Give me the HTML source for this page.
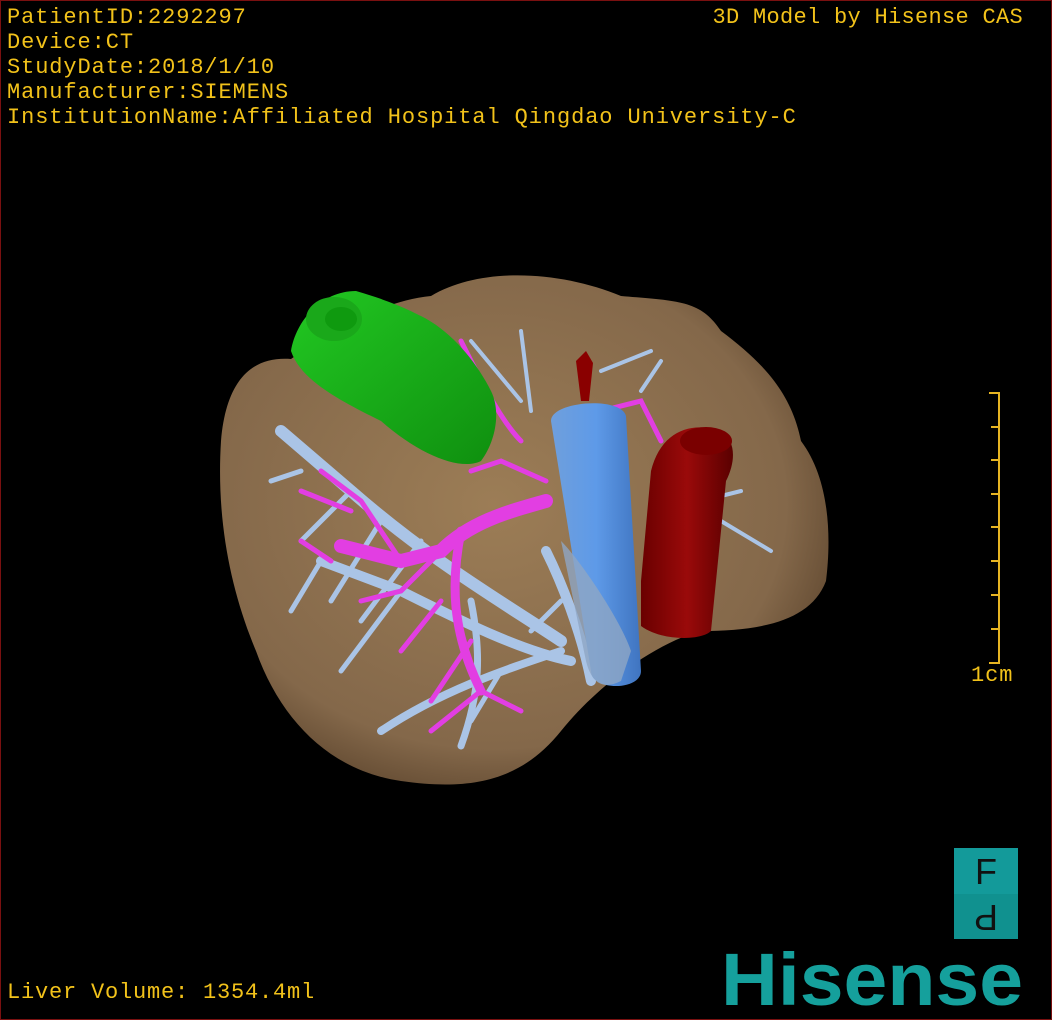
<!DOCTYPE html>
<html><head><meta charset="utf-8"><style>
html,body{margin:0;padding:0;background:#000;}
#w{position:relative;width:1050px;height:1018px;border:1px solid #7a1010;overflow:hidden;background:#000;}
.t{position:absolute;color:#f2c21a;font-family:"Liberation Mono","DejaVu Sans Mono",monospace;font-size:22px;line-height:25px;white-space:pre;letter-spacing:0.9px}
</style></head><body><div id="w">
<svg width="1050" height="1018" style="position:absolute;left:0;top:0">
<defs>
<radialGradient id="lv" cx="45%" cy="45%" r="60%"><stop offset="0" stop-color="#9c7d56"/><stop offset="0.8" stop-color="#84684a"/><stop offset="1" stop-color="#604830"/></radialGradient>
<linearGradient id="ivc" x1="0" x2="1"><stop offset="0" stop-color="#6f9fdc"/><stop offset="0.5" stop-color="#5e9ae8"/><stop offset="1" stop-color="#3f74c0"/></linearGradient>
<linearGradient id="ao" x1="0" x2="1"><stop offset="0" stop-color="#6a0000"/><stop offset="0.5" stop-color="#9a0a0a"/><stop offset="1" stop-color="#5a0000"/></linearGradient>
<linearGradient id="gb" x1="0" x2="1" y1="0" y2="1"><stop offset="0" stop-color="#22c822"/><stop offset="1" stop-color="#0f8f0f"/></linearGradient>
</defs>
<path d="M430 295 C480 265 560 270 620 295 C680 300 700 300 720 330 C760 360 790 390 800 440 C830 480 830 540 825 580 C810 620 760 630 700 630 C660 640 600 680 560 730 C520 780 470 790 400 780 C330 770 280 720 255 650 C230 590 215 520 220 440 C225 380 250 355 290 358 C330 330 380 300 430 295 Z" fill="url(#lv)"/>
<g fill="none" stroke="#aac4e6" stroke-linecap="round">
<path d="M560 640 C500 600 430 560 350 490 L280 430" stroke-width="12"/>
<path d="M570 660 C520 650 460 620 400 590 L320 560" stroke-width="10"/>
<path d="M560 650 C500 670 440 690 380 730" stroke-width="8"/>
<path d="M470 600 C480 650 480 690 460 745" stroke-width="7"/>
<path d="M350 490 L300 540 M380 520 L330 600 M420 540 L360 620 M300 470 L270 480 M320 560 L290 610 M400 590 L340 670 M500 670 L470 720 M530 630 L560 600" stroke-width="5"/>
<path d="M520 330 L530 410 M470 340 L520 400 M600 370 L650 350 M640 390 L660 360 M720 520 L770 550 M700 500 L740 490" stroke-width="4"/>
<path d="M545 550 C560 580 580 630 590 680" stroke-width="10"/>
</g>
<g fill="none" stroke="#e23ee2" stroke-linecap="round">
<path d="M545 500 C510 510 470 520 440 550 L400 560 L340 545" stroke-width="14"/>
<path d="M460 530 C450 580 450 630 480 690" stroke-width="9"/>
<path d="M440 550 L400 590 L360 600 M400 560 L360 500 L320 470 M470 640 L430 700 M480 690 L430 730 M300 490 L350 510 M300 540 L330 560 M480 690 L520 710 M440 600 L400 650" stroke-width="5"/>
<path d="M520 440 C500 420 480 380 460 340 M545 480 L500 460 L470 470 M600 410 L640 400 L660 440" stroke-width="5"/>
</g>
<path d="M550 420 C550 400 620 395 625 415 L640 670 C640 690 590 690 590 670 Z" fill="url(#ivc)"/>
<path d="M560 540 C580 560 620 620 630 650 L620 680 C600 690 590 680 585 660 Z" fill="#8fa6c4" opacity="0.8"/>
<path d="M640 580 L650 470 C660 430 690 420 720 430 C735 440 735 460 725 480 L710 630 C700 640 660 640 640 625 Z" fill="url(#ao)"/>
<ellipse cx="705" cy="440" rx="26" ry="14" fill="#7a0000"/>
<path d="M575 360 L585 350 L592 362 L588 400 L580 400 Z" fill="#8a0000"/>
<path d="M290 350 C295 320 320 290 355 290 C390 300 410 310 420 315 C450 330 475 360 490 390 C500 410 495 440 480 460 C460 470 420 455 380 420 C340 400 300 380 290 350 Z" fill="url(#gb)"/>
<ellipse cx="333" cy="318" rx="28" ry="22" fill="#1aa81a"/>
<ellipse cx="340" cy="318" rx="16" ry="12" fill="#0f9a0f"/>
<g stroke="#e6b422" stroke-width="2" fill="none">
<path d="M988 392 L998 392 L998 662 L988 662"/>
<path d="M990 426 H998 M990 459 H998 M990 493 H998 M990 526 H998 M990 560 H998 M990 594 H998 M990 628 H998"/>
</g>
<rect x="953" y="847" width="64" height="91" fill="#139a9a"/>
<rect x="953" y="893" width="64" height="45" fill="#10918f"/>
<text x="985" y="883" font-family="Liberation Sans,sans-serif" font-size="36" fill="#111" text-anchor="middle">F</text>
<text x="985" y="930" font-family="Liberation Sans,sans-serif" font-size="36" fill="#111" text-anchor="middle" transform="rotate(180 985 917)">P</text>
<text x="720" y="1004" font-family="Liberation Sans,sans-serif" font-weight="bold" font-size="74" fill="#15a09c" textLength="302" lengthAdjust="spacingAndGlyphs">Hisense</text>
</svg>
<div class="t" style="left:6px;top:4px">PatientID:2292297
Device:CT
StudyDate:2018/1/10
Manufacturer:SIEMENS
InstitutionName:Affiliated Hospital Qingdao University-C</div>
<div class="t" style="right:28px;top:4px;letter-spacing:0.3px">3D Model by Hisense CAS</div>
<div class="t" style="left:970px;top:662px">1cm</div>
<div class="t" style="left:6px;top:979px;letter-spacing:0.8px">Liver Volume: 1354.4ml</div>
</div></body></html>
